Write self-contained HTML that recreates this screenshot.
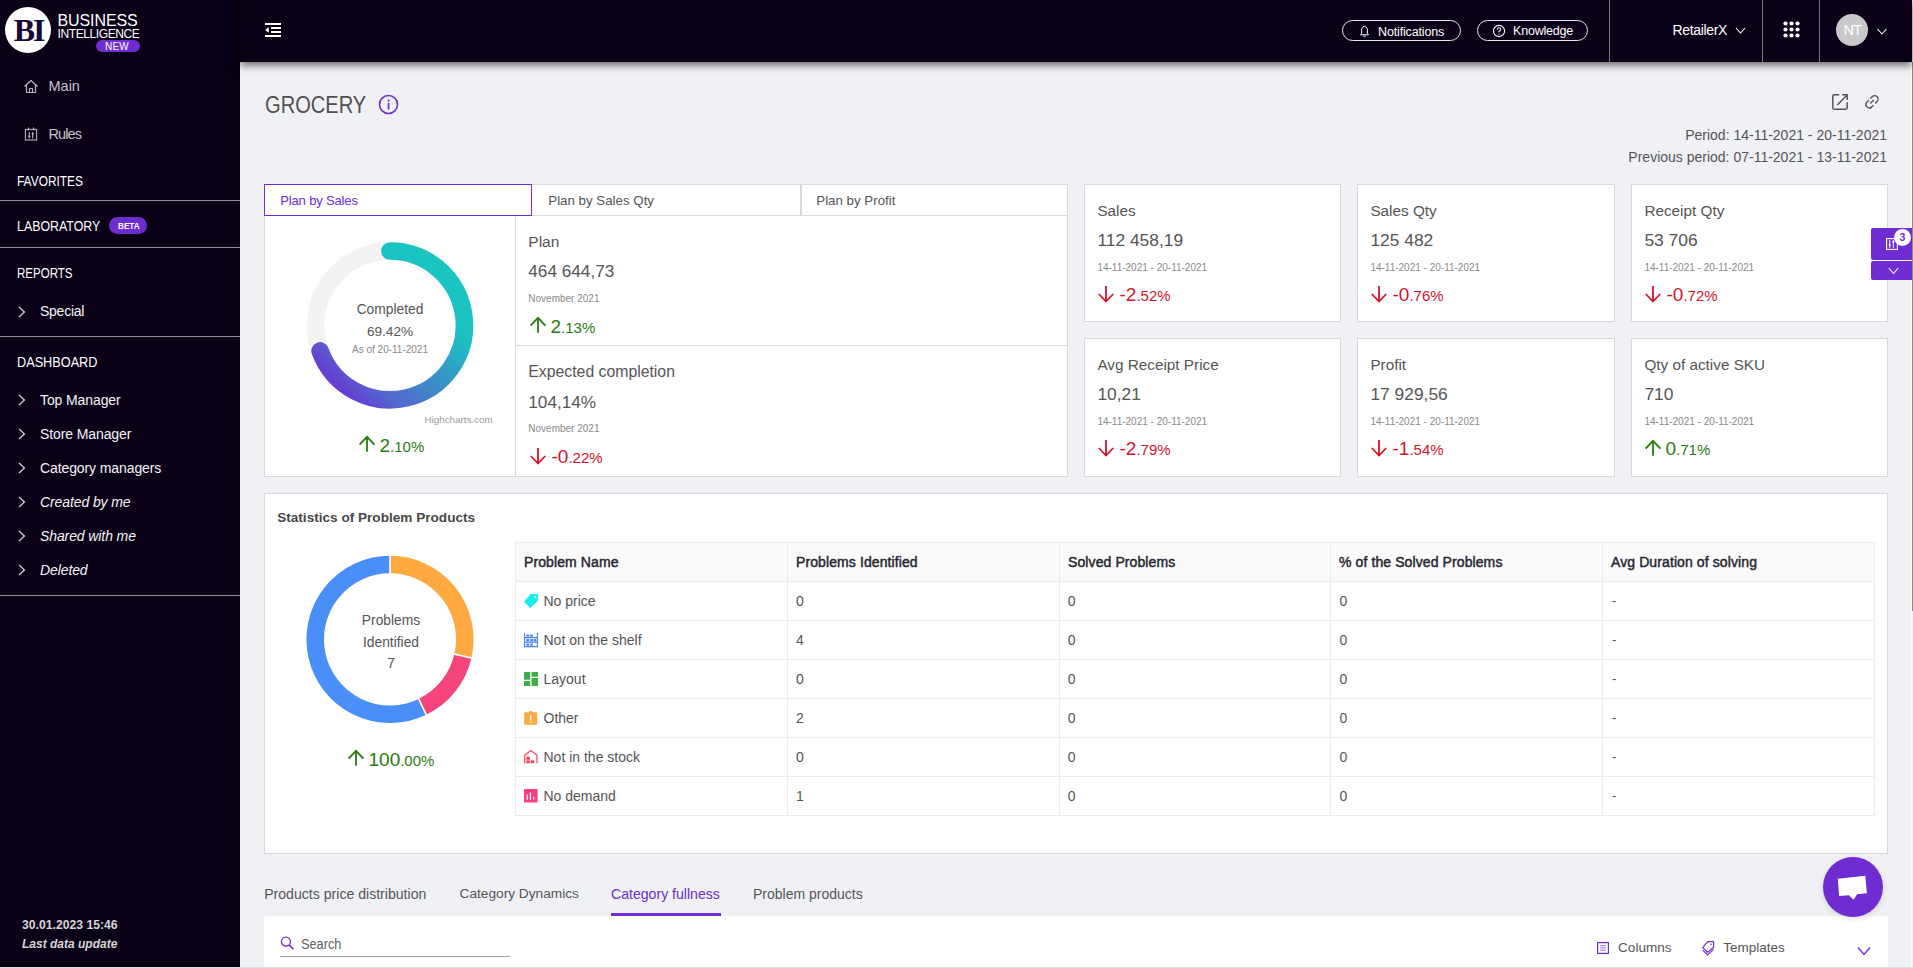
<!DOCTYPE html>
<html><head><meta charset="utf-8">
<style>
*{margin:0;padding:0;box-sizing:border-box}
html,body{width:1913px;height:968px;overflow:hidden}
body{font-family:"Liberation Sans",sans-serif;background:#f0f1f5;position:relative;color:#555}
.a{position:absolute;white-space:nowrap}
svg.a{overflow:visible}
</style></head><body>
<div class="a" style="left:0px;top:0px;width:240px;height:968px;background:#0a0119"></div>
<div class="a" style="left:5px;top:7px;width:46px;height:46px;border-radius:50%;background:#fff"></div>
<div class="a" style="top:13.91px;font-size:32px;line-height:32px;color:#170935;font-weight:700;left:13.8px;font-family:'Liberation Serif',serif;letter-spacing:-2.2px;">BI</div>
<div class="a" style="top:12.96px;font-size:16px;line-height:16px;color:#fff;letter-spacing:-0.1px;left:57.5px;">BUSINESS</div>
<div class="a" style="top:27.84px;font-size:12px;line-height:12px;color:#fff;letter-spacing:-0.4px;left:57.5px;">INTELLIGENCE</div>
<div class="a" style="left:95.5px;top:40px;width:44px;height:12px;border-radius:6px;background:#6f2dd1"></div>
<div class="a" style="top:41.53px;font-size:10px;line-height:10px;color:#fff;letter-spacing:0.2px;left:105px;">NEW</div>
<svg class="a" style="left:23px;top:79px;" width="16" height="15" viewBox="0 0 16 15"><path d="M1.5 7.5 L8 1.5 L14.5 7.5 M3.5 6 V13.5 H12.5 V6 M6.5 13.5 V9.5 H9.5 V13.5" fill="none" stroke="#b4b2bc" stroke-width="1.2" stroke-linejoin="round"/></svg>
<div class="a" style="top:79.23px;font-size:14.5px;line-height:14.5px;color:#c4c2cc;left:48.5px;">Main</div>
<svg class="a" style="left:24px;top:126px;" width="14" height="16" viewBox="0 0 14 16"><rect x="1.4" y="3.4" width="11.2" height="10.6" fill="none" stroke="#b4b2bc" stroke-width="1.1"/><path d="M4.5 1.6 V4.5 M9.5 1.6 V4.5 M5.3 6.2 V12.4 M8.7 6.2 V12.4" stroke="#b4b2bc" stroke-width="1.1"/><circle cx="5.3" cy="10.4" r="1.1" fill="#b4b2bc"/><circle cx="8.7" cy="7.8" r="1.1" fill="#b4b2bc"/></svg>
<div class="a" style="top:126.73px;font-size:14.5px;line-height:14.5px;color:#c4c2cc;letter-spacing:-0.9px;left:48.5px;">Rules</div>
<div class="a" style="top:174.15px;font-size:14px;line-height:14px;color:#fff;left:16.5px;transform:scaleX(0.851);transform-origin:0 0;">FAVORITES</div>
<div class="a" style="left:0px;top:200px;width:240px;height:1px;background:#8f8d96"></div>
<div class="a" style="top:219.15px;font-size:14px;line-height:14px;color:#fff;left:16.5px;transform:scaleX(0.885);transform-origin:0 0;">LABORATORY</div>
<div class="a" style="left:109px;top:217px;width:38px;height:17px;border-radius:9px;background:#6f2dd1"></div>
<div class="a" style="top:221.46px;font-size:9.5px;line-height:9.5px;color:#fff;font-weight:700;left:118px;transform:scaleX(0.86);transform-origin:0 0;">BETA</div>
<div class="a" style="left:0px;top:247px;width:240px;height:1px;background:#8f8d96"></div>
<div class="a" style="top:266.35px;font-size:14px;line-height:14px;color:#fff;left:16.5px;transform:scaleX(0.824);transform-origin:0 0;">REPORTS</div>
<svg class="a" style="left:17px;top:305.5px;" width="10" height="12" viewBox="0 0 10 12"><path d="M2 1 L7.5 6 L2 11" fill="none" stroke="#d8d8dc" stroke-width="1.2"/></svg>
<div class="a" style="top:304.15px;font-size:14px;line-height:14px;color:#f4f4f6;letter-spacing:-0.25px;left:40px;">Special</div>
<div class="a" style="left:0px;top:336px;width:240px;height:1px;background:#8f8d96"></div>
<div class="a" style="top:355.15px;font-size:14px;line-height:14px;color:#fff;left:16.5px;transform:scaleX(0.907);transform-origin:0 0;">DASHBOARD</div>
<svg class="a" style="left:17px;top:394.4px;" width="10" height="12" viewBox="0 0 10 12"><path d="M2 1 L7.5 6 L2 11" fill="none" stroke="#d8d8dc" stroke-width="1.2"/></svg>
<div class="a" style="top:393.05px;font-size:14px;line-height:14px;color:#f4f4f6;letter-spacing:-0.1px;left:40px;">Top Manager</div>
<svg class="a" style="left:17px;top:428.4px;" width="10" height="12" viewBox="0 0 10 12"><path d="M2 1 L7.5 6 L2 11" fill="none" stroke="#d8d8dc" stroke-width="1.2"/></svg>
<div class="a" style="top:427.05px;font-size:14px;line-height:14px;color:#f4f4f6;letter-spacing:-0.1px;left:40px;">Store Manager</div>
<svg class="a" style="left:17px;top:462.4px;" width="10" height="12" viewBox="0 0 10 12"><path d="M2 1 L7.5 6 L2 11" fill="none" stroke="#d8d8dc" stroke-width="1.2"/></svg>
<div class="a" style="top:461.05px;font-size:14px;line-height:14px;color:#f4f4f6;letter-spacing:-0.1px;left:40px;">Category managers</div>
<svg class="a" style="left:17px;top:496.4px;" width="10" height="12" viewBox="0 0 10 12"><path d="M2 1 L7.5 6 L2 11" fill="none" stroke="#d8d8dc" stroke-width="1.2"/></svg>
<div class="a" style="top:495.05px;font-size:14px;line-height:14px;color:#f4f4f6;font-style:italic;letter-spacing:-0.1px;left:40px;">Created by me</div>
<svg class="a" style="left:17px;top:530.4px;" width="10" height="12" viewBox="0 0 10 12"><path d="M2 1 L7.5 6 L2 11" fill="none" stroke="#d8d8dc" stroke-width="1.2"/></svg>
<div class="a" style="top:529.05px;font-size:14px;line-height:14px;color:#f4f4f6;font-style:italic;letter-spacing:-0.1px;left:40px;">Shared with me</div>
<svg class="a" style="left:17px;top:564.4px;" width="10" height="12" viewBox="0 0 10 12"><path d="M2 1 L7.5 6 L2 11" fill="none" stroke="#d8d8dc" stroke-width="1.2"/></svg>
<div class="a" style="top:563.05px;font-size:14px;line-height:14px;color:#f4f4f6;font-style:italic;letter-spacing:-0.1px;left:40px;">Deleted</div>
<div class="a" style="left:0px;top:595px;width:240px;height:1px;background:#8f8d96"></div>
<div class="a" style="top:918.67px;font-size:12.2px;line-height:12.2px;color:#d6d6d6;font-weight:700;left:22px;">30.01.2023 15:46</div>
<div class="a" style="top:937.84px;font-size:12px;line-height:12px;color:#d6d6d6;font-weight:700;font-style:italic;left:22px;">Last data update</div>
<div class="a" style="left:240px;top:0px;width:1672px;height:62px;background:#0a0119;box-shadow:0 3px 8px rgba(0,0,0,.6);z-index:3"></div>
<div class="a" style="left:228px;top:0px;width:12px;height:62px;background:linear-gradient(90deg,rgba(0,0,0,0),rgba(0,0,0,.45));z-index:4"></div>
<svg class="a" style="left:264px;top:22px;z-index:4" width="18" height="16" viewBox="0 0 18 16"><path d="M1 2 H17 M7 6 H17 M7 10 H17 M1 14 H17" stroke="#fff" stroke-width="1.8"/><path d="M1 8 L4.8 5.3 V10.7 Z" fill="#fff"/></svg>
<div class="a" style="left:1341.5px;top:20px;width:119px;height:21px;border:1px solid #e8e8ea;border-radius:11px;z-index:4"></div>
<svg class="a" style="left:1358.5px;top:25px;z-index:4" width="11" height="13" viewBox="0 0 11 13"><path d="M5.5 1.5 C3.2 1.5 2.6 3.5 2.6 5.2 V8.4 L1.5 9.8 H9.5 L8.4 8.4 V5.2 C8.4 3.5 7.8 1.5 5.5 1.5 Z M4.3 11 Q5.5 12.3 6.7 11" fill="none" stroke="#fff" stroke-width="1"/></svg>
<div class="a" style="top:25.62px;font-size:12.5px;line-height:12.5px;color:#fff;letter-spacing:-0.15px;left:1378px;z-index:4">Notifications</div>
<div class="a" style="left:1477px;top:20px;width:111px;height:21px;border:1px solid #e8e8ea;border-radius:11px;z-index:4"></div>
<svg class="a" style="left:1492px;top:24px;z-index:4" width="14" height="14" viewBox="0 0 14 14"><circle cx="7" cy="7" r="5.6" fill="none" stroke="#fff" stroke-width="1.1"/><path d="M5.2 5.6 Q5.2 3.8 7 3.8 Q8.8 3.8 8.8 5.4 Q8.8 6.4 7 7.3 V8.3" fill="none" stroke="#fff" stroke-width="1.1"/><circle cx="7" cy="10.1" r=".7" fill="#fff"/></svg>
<div class="a" style="top:25.42px;font-size:12.5px;line-height:12.5px;color:#fff;letter-spacing:-0.2px;left:1513px;z-index:4">Knowledge</div>
<div class="a" style="left:1609px;top:0px;width:1px;height:62px;background:#77757e;z-index:4"></div>
<div class="a" style="top:22.85px;font-size:14px;line-height:14px;color:#fff;letter-spacing:-0.35px;left:1672.5px;z-index:4">RetailerX</div>
<svg class="a" style="left:1735px;top:26px;z-index:4" width="11" height="9" viewBox="0 0 11 9"><path d="M1 2 L5.5 7 L10 2" fill="none" stroke="#fff" stroke-width="1.1"/></svg>
<div class="a" style="left:1762px;top:0px;width:1px;height:62px;background:#77757e;z-index:4"></div>
<svg class="a" style="left:1783px;top:21.3px;z-index:4" width="18" height="18" viewBox="0 0 18 18"><circle cx="2.5" cy="2.5" r="2.1" fill="#fff"/><circle cx="2.5" cy="8.5" r="2.1" fill="#fff"/><circle cx="2.5" cy="14.5" r="2.1" fill="#fff"/><circle cx="8.5" cy="2.5" r="2.1" fill="#fff"/><circle cx="8.5" cy="8.5" r="2.1" fill="#fff"/><circle cx="8.5" cy="14.5" r="2.1" fill="#fff"/><circle cx="14.5" cy="2.5" r="2.1" fill="#fff"/><circle cx="14.5" cy="8.5" r="2.1" fill="#fff"/><circle cx="14.5" cy="14.5" r="2.1" fill="#fff"/></svg>
<div class="a" style="left:1819px;top:0px;width:1px;height:62px;background:#77757e;z-index:4"></div>
<div class="a" style="left:1836px;top:14px;width:32px;height:32px;border-radius:50%;background:#c9c9cb;z-index:4"></div>
<div class="a" style="top:23.23px;font-size:14.5px;line-height:14.5px;color:#fff;letter-spacing:-0.6px;left:1836.50px;width:32px;text-align:center;z-index:4">NT</div>
<svg class="a" style="left:1876px;top:27px;z-index:4" width="12" height="9" viewBox="0 0 12 9"><path d="M1.5 2 L6 7 L10.5 2" fill="none" stroke="#fff" stroke-width="1.1"/></svg>
<div class="a" style="top:94.11px;font-size:23.5px;line-height:23.5px;color:#505050;left:264.5px;transform:scaleX(0.855);transform-origin:0 0;">GROCERY</div>
<svg class="a" style="left:378px;top:94px;" width="21" height="21" viewBox="0 0 21 21"><circle cx="10.5" cy="10.5" r="9" fill="none" stroke="#6f2dd1" stroke-width="1.6"/><rect x="9.7" y="9" width="1.7" height="6.5" fill="#6f2dd1"/><circle cx="10.55" cy="6.6" r="1.05" fill="#6f2dd1"/></svg>
<svg class="a" style="left:1832px;top:94px;" width="16" height="16" viewBox="0 0 16 16"><path d="M7.2 0.8 H2.2 Q0.8 0.8 0.8 2.2 V13.8 Q0.8 15.2 2.2 15.2 H13.8 Q15.2 15.2 15.2 13.8 V8.3" fill="none" stroke="#555" stroke-width="1.5"/><path d="M5.3 11 L14.6 1.4 M10.1 0.8 H15.2 V6" fill="none" stroke="#555" stroke-width="1.5"/></svg>
<svg class="a" style="left:1864px;top:94px;" width="16" height="16" viewBox="0 0 16 16"><path d="M6.3 4.6 L8.2 2.7 A3.4 3.4 0 0 1 13.1 7.5 L11.2 9.4 M4.8 6.3 L2.9 8.2 A3.4 3.4 0 0 0 7.6 13.1 L9.5 11.2 M6.2 9.6 L9.8 6" fill="none" stroke="#555" stroke-width="1.4"/></svg>
<div class="a" style="top:128.15px;font-size:14px;line-height:14px;color:#555;right:26px;">Period: 14-11-2021 - 20-11-2021</div>
<div class="a" style="top:149.65px;font-size:14px;line-height:14px;color:#555;right:26px;">Previous period: 07-11-2021 - 13-11-2021</div>
<div class="a" style="left:264px;top:184px;width:804px;height:293px;background:#fff;border:1px solid #d9d9d9"></div>
<div class="a" style="left:264px;top:215px;width:804px;height:1px;background:#d9d9d9"></div>
<div class="a" style="left:531px;top:184px;width:1px;height:32px;background:#d9d9d9"></div>
<div class="a" style="left:800px;top:184px;width:1.5px;height:32px;background:#d9d9d9"></div>
<div class="a" style="left:264px;top:184px;width:268px;height:32px;border:1px solid #6f2dd1"></div>
<div class="a" style="top:193.91px;font-size:13.1px;line-height:13.1px;color:#6f2dd1;letter-spacing:-0.2px;left:280.3px;">Plan by Sales</div>
<div class="a" style="top:193.74px;font-size:13.3px;line-height:13.3px;color:#555;left:548.3px;">Plan by Sales Qty</div>
<div class="a" style="top:193.74px;font-size:13.3px;line-height:13.3px;color:#555;left:816.3px;">Plan by Profit</div>
<div class="a" style="left:515px;top:216px;width:1px;height:260px;background:#d9d9d9"></div>
<div class="a" style="left:515px;top:345px;width:552px;height:1px;background:#d9d9d9"></div>
<div class="a" style="top:233.88px;font-size:15.5px;line-height:15.5px;color:#555;left:528.3px;">Plan</div>
<div class="a" style="top:263.44px;font-size:17.2px;line-height:17.2px;color:#555;left:528.3px;">464 644,73</div>
<div class="a" style="top:293.54px;font-size:10px;line-height:10px;color:#8a8a8a;left:528.3px;">November 2021</div>
<svg class="a" style="left:529.8px;top:316px;" width="16" height="17" viewBox="0 0 16 17"><path d="M8 16.8 V1.6 M0.6 9.6 L8 1.9 L15.4 9.6" fill="none" stroke="#2a7a12" stroke-width="1.8"/></svg>
<div class="a" style="left:550.5px;top:316.92px;font-size:19px;line-height:19px;color:#2a7a12">2<span style="font-size:15px">.13%</span></div>
<div class="a" style="top:363.93px;font-size:15.8px;line-height:15.8px;color:#555;left:528.3px;">Expected completion</div>
<div class="a" style="top:393.64px;font-size:17.2px;line-height:17.2px;color:#555;left:528.3px;">104,14%</div>
<div class="a" style="top:423.94px;font-size:10px;line-height:10px;color:#8a8a8a;left:528.3px;">November 2021</div>
<svg class="a" style="left:530.3px;top:447.8px;" width="16" height="17" viewBox="0 0 16 17"><path d="M8 0 V15.4 M0.8 8 L8 15.5 L15.2 8" fill="none" stroke="#d4142a" stroke-width="1.8"/></svg>
<div class="a" style="left:551.5px;top:447.22px;font-size:19px;line-height:19px;color:#d4142a">-0<span style="font-size:15px">.22%</span></div>
<svg class="a" style="left:300px;top:235px;" width="180" height="180" viewBox="300 235 180 180"><defs><linearGradient id="g1" gradientUnits="userSpaceOnUse" x1="473" y1="242" x2="306" y2="408"><stop offset="0" stop-color="#17c6c1"/><stop offset="0.3" stop-color="#1bc3c2"/><stop offset="0.52" stop-color="#3a90c8"/><stop offset="0.72" stop-color="#5366cf"/><stop offset="0.85" stop-color="#6a3ad0"/><stop offset="1" stop-color="#6d35d1"/></linearGradient></defs><circle cx="390" cy="325.4" r="74.4" fill="none" stroke="#f3f3f3" stroke-width="17.6"/><path d="M 390 250.99999999999997 A 74.4 74.4 0 1 1 320.13 350.95" fill="none" stroke="url(#g1)" stroke-width="17.6" stroke-linecap="round"/></svg>
<div class="a" style="top:303.32px;font-size:13.8px;line-height:13.8px;color:#555;left:330.00px;width:120px;text-align:center;">Completed</div>
<div class="a" style="top:325.29px;font-size:13.6px;line-height:13.6px;color:#555;left:330.00px;width:120px;text-align:center;">69.42%</div>
<div class="a" style="top:345.14px;font-size:10px;line-height:10px;color:#8a8a8a;left:330.00px;width:120px;text-align:center;">As of 20-11-2021</div>
<div class="a" style="top:414.50px;font-size:9.8px;line-height:9.8px;color:#999;right:1420.4px;">Highcharts.com</div>
<svg class="a" style="left:358.8px;top:435px;" width="16" height="17" viewBox="0 0 16 17"><path d="M8 16.8 V1.6 M0.6 9.6 L8 1.9 L15.4 9.6" fill="none" stroke="#2a7a12" stroke-width="1.8"/></svg>
<div class="a" style="left:379.5px;top:435.92px;font-size:19px;line-height:19px;color:#2a7a12">2<span style="font-size:15px">.10%</span></div>
<div class="a" style="left:1084px;top:184px;width:257px;height:138px;background:#fff;border:1px solid #d9d9d9"></div>
<div class="a" style="top:203.05px;font-size:15.3px;line-height:15.3px;color:#555;left:1097.4px;">Sales</div>
<div class="a" style="top:232.27px;font-size:17.4px;line-height:17.4px;color:#555;left:1097.4px;">112 458,19</div>
<div class="a" style="top:262.54px;font-size:10px;line-height:10px;color:#8a8a8a;left:1097.4px;">14-11-2021 - 20-11-2021</div>
<svg class="a" style="left:1098.3px;top:286.0px;" width="16" height="17" viewBox="0 0 16 17"><path d="M8 0 V15.4 M0.8 8 L8 15.5 L15.2 8" fill="none" stroke="#d4142a" stroke-width="1.8"/></svg>
<div class="a" style="left:1119.5px;top:285.42px;font-size:19px;line-height:19px;color:#d4142a">-2<span style="font-size:15px">.52%</span></div>
<div class="a" style="left:1357px;top:184px;width:258px;height:138px;background:#fff;border:1px solid #d9d9d9"></div>
<div class="a" style="top:203.05px;font-size:15.3px;line-height:15.3px;color:#555;left:1370.4px;">Sales Qty</div>
<div class="a" style="top:232.27px;font-size:17.4px;line-height:17.4px;color:#555;left:1370.4px;">125 482</div>
<div class="a" style="top:262.54px;font-size:10px;line-height:10px;color:#8a8a8a;left:1370.4px;">14-11-2021 - 20-11-2021</div>
<svg class="a" style="left:1371.3px;top:286.0px;" width="16" height="17" viewBox="0 0 16 17"><path d="M8 0 V15.4 M0.8 8 L8 15.5 L15.2 8" fill="none" stroke="#d4142a" stroke-width="1.8"/></svg>
<div class="a" style="left:1392.5px;top:285.42px;font-size:19px;line-height:19px;color:#d4142a">-0<span style="font-size:15px">.76%</span></div>
<div class="a" style="left:1631px;top:184px;width:257px;height:138px;background:#fff;border:1px solid #d9d9d9"></div>
<div class="a" style="top:203.05px;font-size:15.3px;line-height:15.3px;color:#555;left:1644.4px;">Receipt Qty</div>
<div class="a" style="top:232.27px;font-size:17.4px;line-height:17.4px;color:#555;left:1644.4px;">53 706</div>
<div class="a" style="top:262.54px;font-size:10px;line-height:10px;color:#8a8a8a;left:1644.4px;">14-11-2021 - 20-11-2021</div>
<svg class="a" style="left:1645.3px;top:286.0px;" width="16" height="17" viewBox="0 0 16 17"><path d="M8 0 V15.4 M0.8 8 L8 15.5 L15.2 8" fill="none" stroke="#d4142a" stroke-width="1.8"/></svg>
<div class="a" style="left:1666.5px;top:285.42px;font-size:19px;line-height:19px;color:#d4142a">-0<span style="font-size:15px">.72%</span></div>
<div class="a" style="left:1084px;top:338px;width:257px;height:139px;background:#fff;border:1px solid #d9d9d9"></div>
<div class="a" style="top:357.05px;font-size:15.3px;line-height:15.3px;color:#555;left:1097.4px;">Avg Receipt Price</div>
<div class="a" style="top:386.27px;font-size:17.4px;line-height:17.4px;color:#555;left:1097.4px;">10,21</div>
<div class="a" style="top:416.54px;font-size:10px;line-height:10px;color:#8a8a8a;left:1097.4px;">14-11-2021 - 20-11-2021</div>
<svg class="a" style="left:1098.3px;top:440.0px;" width="16" height="17" viewBox="0 0 16 17"><path d="M8 0 V15.4 M0.8 8 L8 15.5 L15.2 8" fill="none" stroke="#d4142a" stroke-width="1.8"/></svg>
<div class="a" style="left:1119.5px;top:439.42px;font-size:19px;line-height:19px;color:#d4142a">-2<span style="font-size:15px">.79%</span></div>
<div class="a" style="left:1357px;top:338px;width:258px;height:139px;background:#fff;border:1px solid #d9d9d9"></div>
<div class="a" style="top:357.05px;font-size:15.3px;line-height:15.3px;color:#555;left:1370.4px;">Profit</div>
<div class="a" style="top:386.27px;font-size:17.4px;line-height:17.4px;color:#555;left:1370.4px;">17 929,56</div>
<div class="a" style="top:416.54px;font-size:10px;line-height:10px;color:#8a8a8a;left:1370.4px;">14-11-2021 - 20-11-2021</div>
<svg class="a" style="left:1371.3px;top:440.0px;" width="16" height="17" viewBox="0 0 16 17"><path d="M8 0 V15.4 M0.8 8 L8 15.5 L15.2 8" fill="none" stroke="#d4142a" stroke-width="1.8"/></svg>
<div class="a" style="left:1392.5px;top:439.42px;font-size:19px;line-height:19px;color:#d4142a">-1<span style="font-size:15px">.54%</span></div>
<div class="a" style="left:1631px;top:338px;width:257px;height:139px;background:#fff;border:1px solid #d9d9d9"></div>
<div class="a" style="top:357.05px;font-size:15.3px;line-height:15.3px;color:#555;left:1644.4px;">Qty of active SKU</div>
<div class="a" style="top:386.27px;font-size:17.4px;line-height:17.4px;color:#555;left:1644.4px;">710</div>
<div class="a" style="top:416.54px;font-size:10px;line-height:10px;color:#8a8a8a;left:1644.4px;">14-11-2021 - 20-11-2021</div>
<svg class="a" style="left:1644.8px;top:438.5px;" width="16" height="17" viewBox="0 0 16 17"><path d="M8 16.8 V1.6 M0.6 9.6 L8 1.9 L15.4 9.6" fill="none" stroke="#2a7a12" stroke-width="1.8"/></svg>
<div class="a" style="left:1665.5px;top:439.42px;font-size:19px;line-height:19px;color:#2a7a12">0<span style="font-size:15px">.71%</span></div>
<div class="a" style="left:264px;top:493px;width:1624px;height:361px;background:#fff;border:1px solid #d9d9d9"></div>
<div class="a" style="top:510.99px;font-size:13.6px;line-height:13.6px;color:#474747;font-weight:700;left:277.2px;">Statistics of Problem Products</div>
<svg class="a" style="left:300px;top:549px;" width="180" height="180" viewBox="300 549 180 180"><path d="M 390.00 564.60 A 74.8 74.8 0 0 1 462.92 656.04" fill="none" stroke="#ffa940" stroke-width="17.5"/><path d="M 462.92 656.04 A 74.8 74.8 0 0 1 422.45 706.79" fill="none" stroke="#f5457c" stroke-width="17.5"/><path d="M 422.45 706.79 A 74.8 74.8 0 1 1 390.00 564.60" fill="none" stroke="#4a8ff7" stroke-width="17.5"/><path d="M 390.00 574.35 L 390.00 554.85" stroke="#fff" stroke-width="1.6"/><path d="M 453.42 653.87 L 472.43 658.21" stroke="#fff" stroke-width="1.6"/><path d="M 418.22 698.01 L 426.68 715.58" stroke="#fff" stroke-width="1.6"/></svg>
<div class="a" style="top:614.02px;font-size:13.8px;line-height:13.8px;color:#555;left:331.00px;width:120px;text-align:center;">Problems</div>
<div class="a" style="top:635.82px;font-size:13.8px;line-height:13.8px;color:#555;left:331.00px;width:120px;text-align:center;">Identified</div>
<div class="a" style="top:657.22px;font-size:13.8px;line-height:13.8px;color:#555;left:331.00px;width:120px;text-align:center;">7</div>
<svg class="a" style="left:347.8px;top:749px;" width="16" height="17" viewBox="0 0 16 17"><path d="M8 16.8 V1.6 M0.6 9.6 L8 1.9 L15.4 9.6" fill="none" stroke="#2a7a12" stroke-width="1.8"/></svg>
<div class="a" style="left:368.5px;top:749.92px;font-size:19px;line-height:19px;color:#2a7a12">100<span style="font-size:15px">.00%</span></div>
<div class="a" style="left:515px;top:542px;width:1360px;height:39px;background:#fafafa"></div>
<div class="a" style="left:515px;top:542px;width:1360px;height:274px;border:1px solid #ececec"></div>
<div class="a" style="left:515px;top:581px;width:1360px;height:1px;background:#ececec"></div>
<div class="a" style="left:515px;top:620px;width:1360px;height:1px;background:#ececec"></div>
<div class="a" style="left:515px;top:659px;width:1360px;height:1px;background:#ececec"></div>
<div class="a" style="left:515px;top:698px;width:1360px;height:1px;background:#ececec"></div>
<div class="a" style="left:515px;top:737px;width:1360px;height:1px;background:#ececec"></div>
<div class="a" style="left:515px;top:776px;width:1360px;height:1px;background:#ececec"></div>
<div class="a" style="left:787px;top:542px;width:1px;height:274px;background:#ececec"></div>
<div class="a" style="left:1059px;top:542px;width:1px;height:274px;background:#ececec"></div>
<div class="a" style="left:1330px;top:542px;width:1px;height:274px;background:#ececec"></div>
<div class="a" style="left:1602px;top:542px;width:1px;height:274px;background:#ececec"></div>
<div class="a" style="top:554.75px;font-size:14px;line-height:14px;color:#262630;letter-spacing:0.1px;left:524px;-webkit-text-stroke:0.45px #262630;">Problem Name</div>
<div class="a" style="top:554.75px;font-size:14px;line-height:14px;color:#262630;letter-spacing:0.1px;left:796px;-webkit-text-stroke:0.45px #262630;">Problems Identified</div>
<div class="a" style="top:554.75px;font-size:14px;line-height:14px;color:#262630;letter-spacing:0.1px;left:1068px;-webkit-text-stroke:0.45px #262630;">Solved Problems</div>
<div class="a" style="top:554.75px;font-size:14px;line-height:14px;color:#262630;letter-spacing:0.1px;left:1339px;-webkit-text-stroke:0.45px #262630;">% of the Solved Problems</div>
<div class="a" style="top:554.75px;font-size:14px;line-height:14px;color:#262630;letter-spacing:0.1px;left:1611px;-webkit-text-stroke:0.45px #262630;">Avg Duration of solving</div>
<svg class="a" style="left:524px;top:594px;" width="14" height="14" viewBox="0 0 14 14"><path d="M6.6 0.6 H13.4 V6.6 L6.2 13.6 L0.6 7.8 Z" fill="#17ecf2" stroke="#17ecf2" stroke-width="1" stroke-linejoin="round"/><circle cx="11.1" cy="2.8" r="0.9" fill="#fff"/></svg>
<div class="a" style="top:594.15px;font-size:14px;line-height:14px;color:#555;left:543.5px;">No price</div>
<div class="a" style="top:594.45px;font-size:14px;line-height:14px;color:#555;left:796px;">0</div>
<div class="a" style="top:594.45px;font-size:14px;line-height:14px;color:#555;left:1067.8px;">0</div>
<div class="a" style="top:594.45px;font-size:14px;line-height:14px;color:#555;left:1339.5px;">0</div>
<div class="a" style="top:594.49px;font-size:13.6px;line-height:13.6px;color:#555;left:1612px;">-</div>
<svg class="a" style="left:524px;top:633px;" width="14" height="14" viewBox="0 0 14 14"><path d="M0.6 0 V14 M13.4 0 V14 M0 4.6 H14 M0 9.2 H14 M0 13.6 H14" stroke="#4a85f0" stroke-width="1.2"/><path d="M2.4 1.4 H5.2 V3.8 H2.4 Z M6.2 1.4 H8.8 V3.8 H6.2 Z M2.4 6 H5.2 V8.4 H2.4 Z M6.2 6 H8.8 V8.4 H6.2 Z M9.6 6 H12.2 V8.4 H9.6 Z M2.4 10.6 H5.2 V12.8 H2.4 Z M6.2 10.6 H8.8 V12.8 H6.2 Z" fill="#4a85f0"/></svg>
<div class="a" style="top:633.15px;font-size:14px;line-height:14px;color:#555;left:543.5px;">Not on the shelf</div>
<div class="a" style="top:633.45px;font-size:14px;line-height:14px;color:#555;left:796px;">4</div>
<div class="a" style="top:633.45px;font-size:14px;line-height:14px;color:#555;left:1067.8px;">0</div>
<div class="a" style="top:633.45px;font-size:14px;line-height:14px;color:#555;left:1339.5px;">0</div>
<div class="a" style="top:633.49px;font-size:13.6px;line-height:13.6px;color:#555;left:1612px;">-</div>
<svg class="a" style="left:524px;top:672px;" width="14" height="14" viewBox="0 0 14 14"><rect x="0" y="0" width="6.2" height="7.7" fill="#41ad49"/><rect x="7.5" y="0" width="6.5" height="4.7" fill="#41ad49"/><rect x="0" y="9" width="6.2" height="5" fill="#41ad49"/><rect x="7.5" y="6" width="6.5" height="8" fill="#41ad49"/></svg>
<div class="a" style="top:672.15px;font-size:14px;line-height:14px;color:#555;left:543.5px;">Layout</div>
<div class="a" style="top:672.45px;font-size:14px;line-height:14px;color:#555;left:796px;">0</div>
<div class="a" style="top:672.45px;font-size:14px;line-height:14px;color:#555;left:1067.8px;">0</div>
<div class="a" style="top:672.45px;font-size:14px;line-height:14px;color:#555;left:1339.5px;">0</div>
<div class="a" style="top:672.49px;font-size:13.6px;line-height:13.6px;color:#555;left:1612px;">-</div>
<svg class="a" style="left:524px;top:711px;" width="14" height="14" viewBox="0 0 14 14"><rect x="0.2" y="1.3" width="13" height="12.5" rx="1" fill="#ffa940"/><rect x="5" y="0" width="3.4" height="2.5" rx="1" fill="#ffa940"/><rect x="6" y="4.3" width="1.4" height="4.8" fill="#fff"/><rect x="6" y="10.2" width="1.4" height="1.4" fill="#fff"/></svg>
<div class="a" style="top:711.15px;font-size:14px;line-height:14px;color:#555;left:543.5px;">Other</div>
<div class="a" style="top:711.45px;font-size:14px;line-height:14px;color:#555;left:796px;">2</div>
<div class="a" style="top:711.45px;font-size:14px;line-height:14px;color:#555;left:1067.8px;">0</div>
<div class="a" style="top:711.45px;font-size:14px;line-height:14px;color:#555;left:1339.5px;">0</div>
<div class="a" style="top:711.49px;font-size:13.6px;line-height:13.6px;color:#555;left:1612px;">-</div>
<svg class="a" style="left:524px;top:750px;" width="14" height="14" viewBox="0 0 14 14"><path d="M0.7 13.2 V5.2 L6.9 0.6 L13 5.2 V13.2" fill="none" stroke="#f0445a" stroke-width="1.2"/><rect x="2.3" y="6.8" width="3.6" height="3" fill="#f0445a"/><rect x="2.3" y="10.4" width="3.6" height="2.8" fill="#f0445a"/><rect x="6.6" y="10.4" width="3.6" height="2.8" fill="#f0445a"/></svg>
<div class="a" style="top:750.15px;font-size:14px;line-height:14px;color:#555;left:543.5px;">Not in the stock</div>
<div class="a" style="top:750.45px;font-size:14px;line-height:14px;color:#555;left:796px;">0</div>
<div class="a" style="top:750.45px;font-size:14px;line-height:14px;color:#555;left:1067.8px;">0</div>
<div class="a" style="top:750.45px;font-size:14px;line-height:14px;color:#555;left:1339.5px;">0</div>
<div class="a" style="top:750.49px;font-size:13.6px;line-height:13.6px;color:#555;left:1612px;">-</div>
<svg class="a" style="left:524px;top:789px;" width="14" height="14" viewBox="0 0 14 14"><rect x="0" y="0" width="13.6" height="13.6" rx="1" fill="#ff3d7a"/><path d="M3.2 5.4 V10.8 M6.4 3.2 V10.8 M9.6 7.8 V10.8" stroke="#fff" stroke-width="1.2"/></svg>
<div class="a" style="top:789.15px;font-size:14px;line-height:14px;color:#555;left:543.5px;">No demand</div>
<div class="a" style="top:789.45px;font-size:14px;line-height:14px;color:#555;left:796px;">1</div>
<div class="a" style="top:789.45px;font-size:14px;line-height:14px;color:#555;left:1067.8px;">0</div>
<div class="a" style="top:789.45px;font-size:14px;line-height:14px;color:#555;left:1339.5px;">0</div>
<div class="a" style="top:789.49px;font-size:13.6px;line-height:13.6px;color:#555;left:1612px;">-</div>
<div class="a" style="top:887.06px;font-size:14.1px;line-height:14.1px;color:#555;left:264.2px;">Products price distribution</div>
<div class="a" style="top:887.40px;font-size:13.7px;line-height:13.7px;color:#555;left:459.5px;">Category Dynamics</div>
<div class="a" style="top:887.06px;font-size:14.1px;line-height:14.1px;color:#6f2dd1;left:611px;">Category fullness</div>
<div class="a" style="left:611px;top:913px;width:109.5px;height:3px;background:#6f2dd1"></div>
<div class="a" style="top:887.15px;font-size:14px;line-height:14px;color:#555;left:753px;">Problem products</div>
<div class="a" style="left:264px;top:916px;width:1624px;height:52px;background:#fff"></div>
<svg class="a" style="left:280px;top:935px;" width="16" height="16" viewBox="0 0 16 16"><circle cx="5.9" cy="6.6" r="4.5" fill="none" stroke="#6f2dd1" stroke-width="1.3"/><path d="M9.1 9.9 L13.5 14.3" stroke="#6f2dd1" stroke-width="1.5"/></svg>
<div class="a" style="top:937.15px;font-size:14px;line-height:14px;color:#606060;left:300.5px;transform:scaleX(0.91);transform-origin:0 0;">Search</div>
<div class="a" style="left:280px;top:956px;width:230px;height:1px;background:#a0a0a0"></div>
<svg class="a" style="left:1597px;top:942px;" width="12" height="12" viewBox="0 0 12 12"><rect x="0.6" y="0.6" width="10.8" height="10.8" fill="none" stroke="#6f2dd1" stroke-width="1.2"/><path d="M3.2 3.6 H8.8 M3.2 5.9 H8.8 M3.2 8.2 H8.8" stroke="#6f2dd1" stroke-width="0.9" opacity="0.75"/></svg>
<div class="a" style="top:941.09px;font-size:13.6px;line-height:13.6px;color:#555;left:1618px;">Columns</div>
<svg class="a" style="left:1702px;top:940.5px;" width="13" height="15" viewBox="0 0 13 15"><path d="M5.6 0.7 H10.8 Q11.6 0.7 11.6 1.5 V6.2 L5.6 11.4 L0.8 6.6 Z" fill="none" stroke="#6f2dd1" stroke-width="1.2" stroke-linejoin="round"/><path d="M0.8 9.2 L5.6 14 L11.6 8.4" fill="none" stroke="#6f2dd1" stroke-width="1.2"/><circle cx="9.2" cy="3.2" r="0.8" fill="#6f2dd1"/></svg>
<div class="a" style="top:941.17px;font-size:13.5px;line-height:13.5px;color:#555;left:1723.3px;">Templates</div>
<svg class="a" style="left:1857px;top:946px;" width="14" height="10" viewBox="0 0 14 10"><path d="M1 1.5 L7 8.5 L13 1.5" fill="none" stroke="#6f2dd1" stroke-width="1.4"/></svg>
<div class="a" style="left:1823px;top:857px;width:60px;height:60px;border-radius:50%;background:#6f2dd1;box-shadow:0 2px 6px rgba(0,0,0,.12)"></div>
<svg class="a" style="left:1837px;top:872px;" width="32" height="30" viewBox="0 0 32 30"><path d="M0.8 6.8 L28.3 3.8 L29.9 21.3 L20.1 22.3 L16.6 27.7 L11.9 23.2 L2.1 24 Z" fill="#fff"/></svg>
<div class="a" style="left:1911px;top:62px;width:1px;height:906px;background:#fafafa"></div>
<div class="a" style="left:1871px;top:259px;width:41px;height:2px;background:#fff"></div>
<div class="a" style="left:1871px;top:228px;width:41px;height:31.5px;border-radius:2px 0 0 2px;background:#6f2dd1"></div>
<div class="a" style="left:1871px;top:261px;width:41px;height:19px;border-radius:2px 0 0 2px;background:#6f2dd1"></div>
<svg class="a" style="left:1886px;top:238px;" width="12" height="12" viewBox="0 0 12 12"><rect x="0.6" y="0.6" width="10.8" height="10.8" fill="none" stroke="#fff" stroke-width="1.1"/><path d="M3.7 2 V10 M7.3 2 V10" stroke="#fff" stroke-width="1"/><circle cx="3.7" cy="7" r="1.1" fill="#fff"/><circle cx="7.3" cy="4" r="1.1" fill="#fff"/></svg>
<div class="a" style="left:1894px;top:228.5px;width:17px;height:17px;border-radius:50%;background:#fff;color:#6f2dd1;font-size:10.5px;font-weight:700;line-height:17px;text-align:center">3</div>
<svg class="a" style="left:1888px;top:267px;" width="11" height="8" viewBox="0 0 11 8"><path d="M0.8 1 L5.5 6.5 L10.2 1" fill="none" stroke="#fff" stroke-width="1.1"/></svg>
<div class="a" style="left:1912px;top:62px;width:1px;height:549px;background:#8a8a8a"></div>
<div class="a" style="left:0px;top:967px;width:1913px;height:1px;background:#d5e3e8"></div>
</body></html>
